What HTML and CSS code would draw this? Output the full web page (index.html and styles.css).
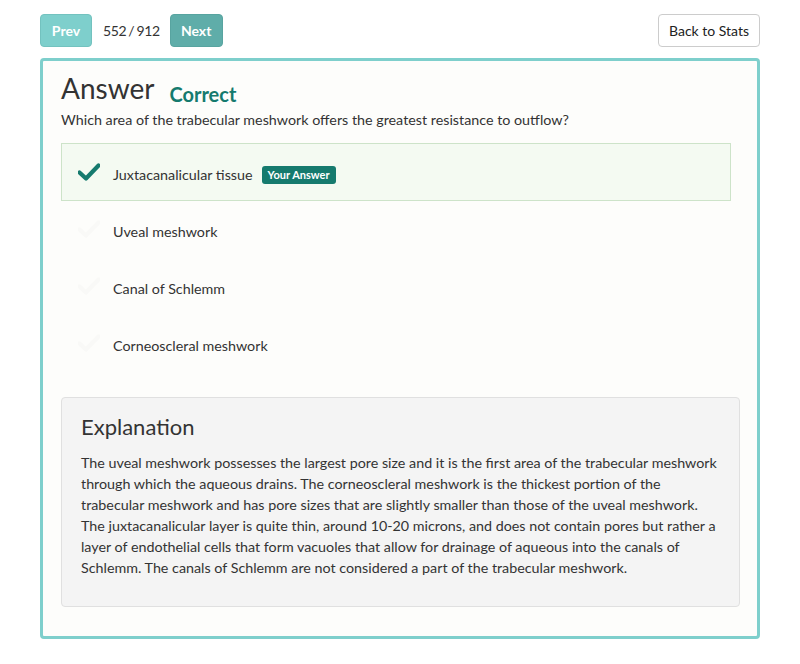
FILE: index.html
```html
<!DOCTYPE html>
<html>
<head>
<meta charset="utf-8">
<link rel="stylesheet" href="styles.css">
</head>
<body>
<div class="page">
  <div class="topbar">
    <div class="nav">
      <button class="btn btn-prev">Prev</button>
      <span class="count">552 / 912</span>
      <button class="btn btn-next">Next</button>
    </div>
    <button class="btn btn-back">Back to Stats</button>
  </div>
  <div class="card">
    <div class="title-row">
      <h1 class="title">Answer</h1>
      <span class="status">Correct</span>
    </div>
    <p class="question">Which area of the trabecular meshwork offers the greatest resistance to outflow?</p>
    <div class="options">
      <div class="option selected">
        <span class="mark"><svg width="22" height="18" viewBox="0 0 22 18"><path d="M1.5 9.5 L8 15.5 L20.5 2.5" fill="none" stroke="#157a6e" stroke-width="4.2" stroke-linecap="round" stroke-linejoin="round"/></svg></span>
        <span class="opt-text">Juxtacanalicular tissue</span>
        <span class="badge">Your Answer</span>
      </div>
      <div class="option"><span class="mark faint"><svg width="22" height="18" viewBox="0 0 22 18"><path d="M1.5 9.5 L8 15.5 L20.5 2.5" fill="none" stroke="#f9f9f7" stroke-width="4.2" stroke-linecap="round" stroke-linejoin="round"/></svg></span><span class="opt-text">Uveal meshwork</span></div>
      <div class="option"><span class="mark faint"><svg width="22" height="18" viewBox="0 0 22 18"><path d="M1.5 9.5 L8 15.5 L20.5 2.5" fill="none" stroke="#f9f9f7" stroke-width="4.2" stroke-linecap="round" stroke-linejoin="round"/></svg></span><span class="opt-text">Canal of Schlemm</span></div>
      <div class="option"><span class="mark faint"><svg width="22" height="18" viewBox="0 0 22 18"><path d="M1.5 9.5 L8 15.5 L20.5 2.5" fill="none" stroke="#f9f9f7" stroke-width="4.2" stroke-linecap="round" stroke-linejoin="round"/></svg></span><span class="opt-text">Corneoscleral meshwork</span></div>
    </div>
    <div class="explanation">
      <h2 class="exp-title">Explanation</h2>
      <p class="exp-text">The uveal meshwork possesses the largest pore size and it is the first area of the trabecular meshwork through which the aqueous drains. The corneoscleral meshwork is the thickest portion of the trabecular meshwork and has pore sizes that are slightly smaller than those of the uveal meshwork. The juxtacanalicular layer is quite thin, around 10-20 microns, and does not contain pores but rather a layer of endothelial cells that form vacuoles that allow for drainage of aqueous into the canals of Schlemm. The canals of Schlemm are not considered a part of the trabecular meshwork.</p>
    </div>
  </div>
</div>
</body>
</html>
```
FILE: styles.css
```css
* { box-sizing: border-box; }
html, body { margin: 0; padding: 0; background: #fff; }
body { font-family: Lato, "Open Sans", sans-serif; color: #333; font-size: 14.3px; }
.page { padding: 14px 40px 0 40px; width: 800px; }
.topbar { display: flex; justify-content: space-between; align-items: center; height: 33px; }
.nav { display: flex; align-items: center; }
.btn { font-family: inherit; font-size: 14px; height: 33px; border-radius: 4px; cursor: pointer; padding: 0; }
.btn-prev { width: 52px; background: #7ecfcc; border: 1px solid #73c2bf; color: #fff; font-weight: bold; }
.btn-next { width: 53px; background: #5fada9; border: 1px solid #58a4a0; color: #fff; font-weight: bold; }
.count { font-size: 14px; color: #333; margin: 0 10px 0 11px; letter-spacing: -0.4px; word-spacing: -1px; }
.btn-back { width: 102px; background: #fff; border: 1px solid #ccc; color: #222; }
.card { margin-top: 11px; border: 3px solid #7ecfcc; border-radius: 4px; background: #fdfdfb; padding: 9px 17px 31px 18px; height: 581px; }
.title-row { display: flex; align-items: baseline; }
.title { font-size: 28px; font-weight: normal; margin: 0; line-height: 36px; color: #333; }
.status { font-size: 20px; font-weight: bold; color: #157a6e; margin-left: 15px; position: relative; top: 3px; }
.question { margin: 4px 0 0 0; line-height: 20px; }
.options { margin-top: 13px; margin-right: 9px; }
.option { display: flex; align-items: center; height: 58px; margin-bottom: -1px; padding-left: 16px; padding-top: 5px; border: 1px solid transparent; }
.option.selected { background: #f4faf2; border-color: #cde3c9; }
.mark { width: 35px; display: flex; align-items: center; margin-top: -5px; }
.opt-text { color: #333; }
.badge { margin-left: 9px; background: #157a6e; color: #fff; font-size: 11px; font-weight: bold; padding: 2px 6px; border-radius: 3px; line-height: 14px; }
.explanation { margin-top: 26px; background: #f4f4f4; border: 1px solid #e0e0e0; border-radius: 4px; padding: 14px 19px 30px 19px; height: 210px; }
.exp-title { font-size: 22px; font-weight: normal; margin: 0 0 10px 0; line-height: 30px; color: #333; }
.exp-text { margin: 0; line-height: 21px; color: #333; }
```
